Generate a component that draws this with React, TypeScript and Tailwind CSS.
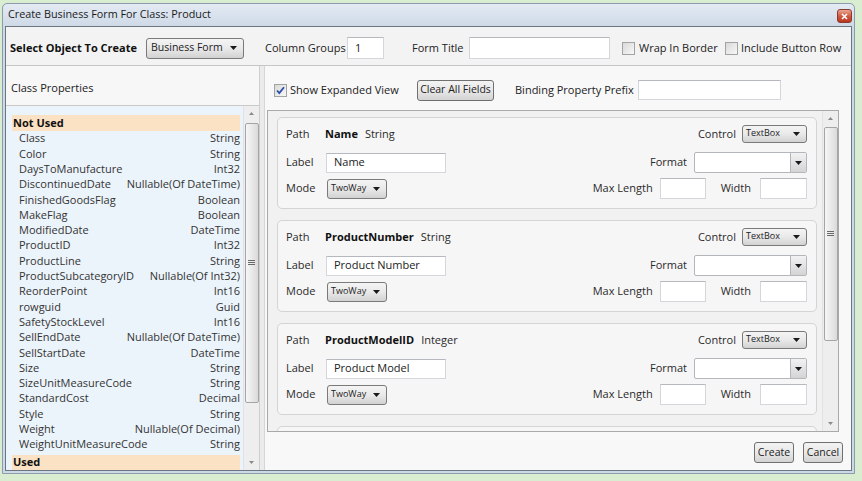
import React from "react";

const props: [string, string][] = [
  ["Class", "String"],
  ["Color", "String"],
  ["DaysToManufacture", "Int32"],
  ["DiscontinuedDate", "Nullable(Of DateTime)"],
  ["FinishedGoodsFlag", "Boolean"],
  ["MakeFlag", "Boolean"],
  ["ModifiedDate", "DateTime"],
  ["ProductID", "Int32"],
  ["ProductLine", "String"],
  ["ProductSubcategoryID", "Nullable(Of Int32)"],
  ["ReorderPoint", "Int16"],
  ["rowguid", "Guid"],
  ["SafetyStockLevel", "Int16"],
  ["SellEndDate", "Nullable(Of DateTime)"],
  ["SellStartDate", "DateTime"],
  ["Size", "String"],
  ["SizeUnitMeasureCode", "String"],
  ["StandardCost", "Decimal"],
  ["Style", "String"],
  ["Weight", "Nullable(Of Decimal)"],
  ["WeightUnitMeasureCode", "String"],
];

const fields = [
  { name: "Name", type: "String", label: "Name" },
  { name: "ProductNumber", type: "String", label: "Product Number" },
  { name: "ProductModelID", type: "Integer", label: "Product Model" },
];

function Arrow({ className = "" }: { className?: string }) {
  return (
    <svg width="7" height="4" viewBox="0 0 7 4" className={className}>
      <path d="M0 0h7L3.5 4z" fill="#1a1a1a" />
    </svg>
  );
}

function Checkbox({ checked }: { checked?: boolean }) {
  return (
    <span className="w-[13px] h-[13px] shrink-0 border border-[#a2a3a3] bg-gradient-to-br from-[#d9d9d9] to-[#f8f8f8] flex items-center justify-center">
      {checked && (
        <svg width="9" height="9" viewBox="0 0 9 9">
          <path d="M1 4.5l2.3 2.5L8 1.2" stroke="#2a4ea8" strokeWidth="1.8" fill="none" />
        </svg>
      )}
    </span>
  );
}

function Combo({ text, w, h, small }: { text: string; w: string; h: string; small?: boolean }) {
  return (
    <div
      className={`${w} ${h} shrink-0 border border-[#7a7a7a] rounded-[3px] bg-gradient-to-b from-[#f4f4f4] via-[#e9e9e9] to-[#d2d2d2] flex items-center justify-between ${small ? "pl-[3px] pr-[6px] text-[9px]" : "pl-[4px] pr-[6px] text-[10.5px]"} text-[#222]`}
    >
      <span className={small ? "-mt-[2px]" : ""}>{text}</span>
      <Arrow />
    </div>
  );
}

function TextInput({ w, h = "h-[21px]", value }: { w: string; h?: string; value?: string }) {
  return (
    <div className={`${w} ${h} shrink-0 bg-white border border-[#d3d6da] border-t-[#b5b8bd] flex items-center px-[7px] text-[11px] text-[#222]`}>
      {value}
    </div>
  );
}

function FormatCombo() {
  return (
    <div className="w-[113px] h-[21px] shrink-0 bg-white border border-[#b3b6bb] rounded-[2px] flex justify-end">
      <div className="w-[16px] h-full border-l border-[#b3b6bb] bg-gradient-to-b from-[#f2f2f2] to-[#d4d4d4] flex items-center justify-center">
        <Arrow />
      </div>
    </div>
  );
}

function ScrollBar({ thumbTop, thumbH }: { thumbTop: string; thumbH: string }) {
  return (
    <div className="w-[16px] shrink-0 h-full bg-[#eeeeee] border-l border-[#e2e2e2] flex flex-col items-center">
      <div className="h-[15px] flex items-center justify-center">
        <svg width="5" height="3" viewBox="0 0 5 3">
          <path d="M0 3h5L2.5 0z" fill="#8a8a8a" />
        </svg>
      </div>
      <div className={`${thumbTop} ${thumbH} w-[14px] border border-[#a5a5a5] rounded-[2px] bg-gradient-to-r from-[#f6f6f6] via-[#e9e9e9] to-[#dadada] flex items-center justify-center`}>
        <svg width="7" height="6" viewBox="0 0 7 6">
          <path d="M0 0.5h7M0 2.5h7M0 4.5h7" stroke="#6a6a6a" strokeWidth="1" />
        </svg>
      </div>
      <div className="flex-1" />
      <div className="h-[15px] flex items-center justify-center">
        <svg width="5" height="3" viewBox="0 0 5 3">
          <path d="M0 0h5L2.5 3z" fill="#8a8a8a" />
        </svg>
      </div>
    </div>
  );
}

function FieldCard({ name, type, label }: { name: string; type: string; label: string }) {
  return (
    <div className="w-[540px] h-[92px] shrink-0 bg-[#f6f6f6] border border-[#d4d4d4] rounded-[5px] pt-[7px] pl-[8px] pr-[9px] flex flex-col text-[11px] text-[#2a2a2a]">
      <div className="h-[18px] flex items-center justify-between">
        <div className="flex items-center">
          <span className="w-[39px]">Path</span>
          <span className="font-bold text-[#111]">{name}</span>
          <span className="ml-[7px]">{type}</span>
        </div>
        <div className="flex items-center">
          <span className="mr-[6px]">Control</span>
          <Combo text="TextBox" w="w-[65px]" h="h-[18px]" small />
        </div>
      </div>
      <div className="h-[21px] mt-[9px] flex items-center justify-between">
        <div className="flex items-center">
          <span className="w-[40px]">Label</span>
          <TextInput w="w-[120px]" h="h-[20px]" value={label} />
        </div>
        <div className="flex items-center">
          <span className="mr-[7px]">Format</span>
          <FormatCombo />
        </div>
      </div>
      <div className="h-[21px] mt-[5px] flex items-center justify-between">
        <div className="flex items-center">
          <span className="w-[41px]">Mode</span>
          <Combo text="TwoWay" w="w-[60px]" h="h-[20px]" small />
        </div>
        <div className="flex items-center">
          <span className="mr-[7px]">Max Length</span>
          <TextInput w="w-[46px]" />
          <span className="ml-[15px] mr-[9px]">Width</span>
          <TextInput w="w-[47px]" />
        </div>
      </div>
    </div>
  );
}

function Button({ text, w }: { text: string; w: string }) {
  return (
    <div className={`${w} h-[21px] shrink-0 border border-[#707070] rounded-[3px] bg-gradient-to-b from-[#f3f3f3] via-[#e8e8e8] to-[#d3d3d3] flex items-center justify-center text-[10.5px] text-[#222] whitespace-nowrap`}>
      {text}
    </div>
  );
}

export default function App() {
  return (
    <div className="w-[862px] h-[481px] bg-[#d9eed1] pt-[3px] pl-[2px] font-['Open_Sans',sans-serif] overflow-hidden">
      <div className="w-[853px] h-[471px] bg-[#ccd9e7] border border-[#8d9bab] rounded-t-[5px] flex flex-col">
        {/* Title bar */}
        <div className="h-[22px] shrink-0 bg-gradient-to-b from-[#e3eaf3] to-[#cfdae7] rounded-t-[5px] flex items-center justify-between pl-[5px] pr-[2px]">
          <span className="text-[10.8px] text-[#1b1b1b] -mt-[1px]">Create Business Form For Class: Product</span>
          <div className="w-[15px] h-[14px] rounded-[3px] border border-[#8b3a2e] bg-gradient-to-b from-[#e8a593] via-[#d25a42] to-[#b9361f] flex items-center justify-center mt-[2px]">
            <svg width="7" height="7" viewBox="0 0 7 7">
              <path d="M1 1l5 5M6 1L1 6" stroke="#fff" strokeWidth="1.6" />
            </svg>
          </div>
        </div>

        {/* Client area */}
        <div className="mx-[2px] mb-[3px] flex-1 border border-[#6c7682] bg-[#f3f3f3] flex flex-col text-[11px] text-[#222]">
          {/* Toolbar */}
          <div className="h-[39px] shrink-0 flex items-center pl-[4px] pt-[4px] border-b border-[#c6c6c6]">
            <span className="w-[136px] font-bold text-[#111]">Select Object To Create</span>
            <Combo text="Business Form" w="w-[98px]" h="h-[21px]" />
            <span className="ml-[21px] w-[82px]">Column Groups</span>
            <TextInput w="w-[37px]" h="h-[22px]" value="1" />
            <span className="ml-[28px] w-[57px]">Form Title</span>
            <TextInput w="w-[141px]" h="h-[22px]" />
            <span className="ml-[12px]"><Checkbox /></span>
            <span className="ml-[4px] w-[86px]">Wrap In Border</span>
            <Checkbox />
            <span className="ml-[3px]">Include Button Row</span>
          </div>

          <div className="flex-1 flex min-h-0">
            {/* Left panel */}
            <div className="w-[254px] shrink-0 flex flex-col border-r border-[#cfcfcf]">
              <div className="h-[39px] shrink-0 flex items-center pl-[5px] pt-[5px] bg-[#f7f7f7]">Class Properties</div>
              <div className="flex-1 flex border-t border-[#c9c9c9] bg-[#ecf4fb] min-h-0">
                <div className="flex-1 pt-[9px] pl-[6px] pr-[3px]">
                  <div className="h-[16px] bg-[#fbe2c4] flex items-center pl-[1px] font-bold text-[#111]">Not Used</div>
                  {props.map(([n, t]) => (
                    <div key={n} className="h-[15.3px] flex items-center justify-between pl-[7px] text-[#333]">
                      <span>{n}</span>
                      <span>{t}</span>
                    </div>
                  ))}
                  <div className="h-[15px] mt-[3px] bg-[#fbe2c4] flex items-center pl-[1px] font-bold text-[#111]">Used</div>
                </div>
                <ScrollBar thumbTop="mt-[2px]" thumbH="h-[280px]" />
              </div>
            </div>

            {/* Splitter */}
            <div className="w-[5px] shrink-0 bg-[#ebebeb] border-r border-[#d6d6d6]" />

            {/* Right panel */}
            <div className="flex-1 flex flex-col bg-[#f8f8f8]">
              <div className="h-[20px] mt-[14px] shrink-0 flex items-center pl-[9px]">
                <Checkbox checked />
                <span className="ml-[3px] w-[127px]">Show Expanded View</span>
                <Button text="Clear All Fields" w="w-[77px]" />
                <span className="ml-[21px] w-[123px]">Binding Property Prefix</span>
                <TextInput w="w-[143px]" h="h-[20px]" />
              </div>

              <div className="mt-[10px] ml-[2px] w-[572px] h-[322px] shrink-0 border border-[#a9a9a9] bg-[#f1f1f1] flex">
                <div className="flex-1 pt-[6px] pl-[9px] flex flex-col gap-[11px] overflow-hidden">
                  {fields.map((f) => (
                    <FieldCard key={f.name} {...f} />
                  ))}
                  <div className="w-[540px] h-[92px] shrink-0 bg-[#f6f6f6] border border-[#d4d4d4] rounded-[5px]" />
                </div>
                <ScrollBar thumbTop="mt-[1px]" thumbH="h-[214px]" />
              </div>

              <div className="mt-[10px] flex justify-end pr-[8px] gap-[9px]">
                <Button text="Create" w="w-[40px]" />
                <Button text="Cancel" w="w-[40px]" />
              </div>
            </div>
          </div>
        </div>
      </div>
    </div>
  );
}
